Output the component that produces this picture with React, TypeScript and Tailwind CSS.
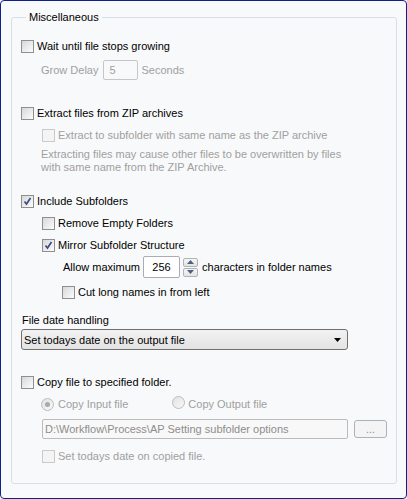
import React from "react";

const FONT = { fontFamily: '"Liberation Sans", Arial, sans-serif' };

function Check({ checked = false, disabled = false }: { checked?: boolean; disabled?: boolean }) {
  return (
    <span
      className={
        "relative inline-block w-[13px] h-[13px] shrink-0 border " +
        (disabled
          ? "border-[#cacaca] bg-[#f4f4f4]"
          : "border-[#8e8f8f] bg-gradient-to-br from-[#d8d8d8] to-[#fcfcfc]")
      }
    >
      {checked && (
        <svg viewBox="0 0 11 11" className="absolute left-0 top-0 w-[11px] h-[11px]">
          <path d="M2.5 5.5 L4.5 8 L8.5 2" fill="none" stroke="#3c4d86" strokeWidth="1.7" />
        </svg>
      )}
    </span>
  );
}

function Radio({ selected = false }: { selected?: boolean }) {
  return (
    <span className="inline-flex w-[13px] h-[13px] shrink-0 rounded-full border border-[#bdbdbd] bg-gradient-to-br from-[#e2e2e2] to-[#f8f8f8] items-center justify-center">
      {selected && <span className="w-[5px] h-[5px] rounded-full bg-[#a9a9a9]" />}
    </span>
  );
}

function CheckRow({
  label,
  checked,
  disabled,
  indent = "",
  mt,
}: {
  label: string;
  checked?: boolean;
  disabled?: boolean;
  indent?: string;
  mt: string;
}) {
  return (
    <div className={"flex items-center h-[16px] " + indent + " " + mt}>
      <Check checked={checked} disabled={disabled} />
      <span className={"ml-[3px] " + (disabled ? "text-[#a0a0a0]" : "text-black")}>{label}</span>
    </div>
  );
}

export default function App() {
  return (
    <div
      className="w-[407px] h-[499px] border border-[#10208a] rounded-[4px] bg-[#f8f9fa] text-[11px] leading-[14px] overflow-hidden"
      style={FONT}
    >
      <fieldset className="mt-[9px] ml-[10px] mr-[9px] h-[474px] border border-[#d5dfe5] rounded-[3px] pl-[9px]">
        <legend className="ml-[5px] px-[3px] text-black leading-[14px]">Miscellaneous</legend>

        {/* Wait until file stops growing */}
        <CheckRow label="Wait until file stops growing" mt="mt-[14px]" />
        <div className="flex items-center h-[20px] mt-[6px] ml-[20px] text-[#a0a0a0]">
          <span>Grow Delay</span>
          <div className="ml-[5px] w-[35px] h-[20px] border border-[#c6c6c6] rounded-[2px] flex items-center pl-[5px]">
            5
          </div>
          <span className="ml-[3px]">Seconds</span>
        </div>

        {/* ZIP */}
        <CheckRow label="Extract files from ZIP archives" mt="mt-[25px]" />
        <CheckRow
          label="Extract to subfolder with same name as the ZIP archive"
          disabled
          indent="ml-[21px]"
          mt="mt-[6px]"
        />
        <p className="mt-[5px] ml-[20px] leading-[13px] text-[#a0a0a0]">
          Extracting files may cause other files to be overwritten by files
          <br />
          with same name from the ZIP Archive.
        </p>

        {/* Subfolders */}
        <CheckRow label="Include Subfolders" checked mt="mt-[19px]" />
        <CheckRow label="Remove Empty Folders" indent="ml-[21px]" mt="mt-[6px]" />
        <CheckRow label="Mirror Subfolder Structure" checked indent="ml-[21px]" mt="mt-[6px]" />
        <div className="flex items-center h-[22px] mt-[3px] ml-[42px]">
          <span>Allow maximum</span>
          <div className="ml-[3px] w-[37px] h-[22px] border border-[#abadb3] bg-white rounded-[2px] flex items-center justify-center">
            256
          </div>
          <div className="ml-[3px] flex flex-col gap-[1px]">
            <div className="w-[15px] h-[9px] border border-[#b3b3b3] rounded-[2px] bg-gradient-to-b from-[#f6f6f6] to-[#e4e4e4] flex items-center justify-center">
              <svg viewBox="0 0 7 4" className="w-[7px] h-[4px]">
                <path d="M0 4 L3.5 0 L7 4 Z" fill="#4d6185" />
              </svg>
            </div>
            <div className="w-[15px] h-[9px] border border-[#b3b3b3] rounded-[2px] bg-gradient-to-b from-[#f6f6f6] to-[#e4e4e4] flex items-center justify-center">
              <svg viewBox="0 0 7 4" className="w-[7px] h-[4px]">
                <path d="M0 0 L3.5 4 L7 0 Z" fill="#4d6185" />
              </svg>
            </div>
          </div>
          <span className="ml-[4px]">characters in folder names</span>
        </div>
        <CheckRow label="Cut long names in from left" indent="ml-[41px]" mt="mt-[6px]" />

        {/* File date handling */}
        <div className="mt-[13px] ml-[1px]">File date handling</div>
        <div className="mt-[2px] w-[327px] h-[21px] border border-[#707070] rounded-[3px] bg-gradient-to-b from-[#f2f2f2] to-[#e3e3e3] flex items-center justify-between pl-[2px] pr-[6px]">
          <span>Set todays date on the output file</span>
          <svg viewBox="0 0 7 4" className="w-[7px] h-[4px]">
            <path d="M0 0 L7 0 L3.5 4 Z" fill="#000" />
          </svg>
        </div>

        {/* Copy file */}
        <CheckRow label="Copy file to specified folder." mt="mt-[24px]" />
        <div className="flex items-center h-[16px] mt-[6px] ml-[20px] text-[#a0a0a0]">
          <Radio selected />
          <span className="ml-[4px]">Copy Input file</span>
          <span className="ml-[44px]">
            <Radio />
          </span>
          <span className="ml-[3px]">Copy Output file</span>
        </div>
        <div className="flex items-center h-[20px] mt-[7px] ml-[21px]">
          <div className="w-[306px] h-[20px] border border-[#bcbcbc] rounded-[2px] bg-[#f8f8f8] text-[#8d8d8d] flex items-center pl-[2px]">
            D:\Workflow\Process\AP Setting subfolder options
          </div>
          <div className="ml-[6px] w-[33px] h-[18px] border border-[#adb2b5] rounded-[3px] bg-[#f4f4f4] text-[#8d8d8d] flex items-center justify-center leading-[10px]">
            ...
          </div>
        </div>
        <CheckRow label="Set todays date on copied file." disabled indent="ml-[21px]" mt="mt-[9px]" />
      </fieldset>
    </div>
  );
}
